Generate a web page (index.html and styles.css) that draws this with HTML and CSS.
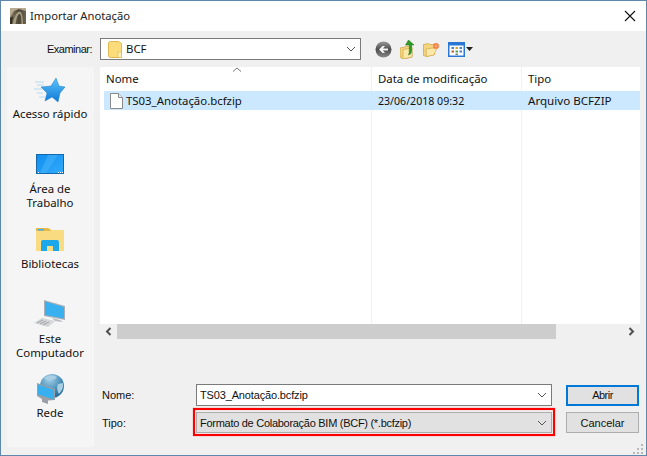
FILE: index.html
```html
<!DOCTYPE html>
<html lang="pt">
<head>
<meta charset="utf-8">
<title>Importar Anotação</title>
<link rel="stylesheet" href="styles.css">
</head>
<body>
<div class="window">
  <header class="titlebar">
    <svg class="app-icon" width="16" height="16" viewBox="0 0 16 16"><defs><linearGradient id="ap" x1="0" y1="0" x2="1" y2="0"><stop offset="0" stop-color="#8a7f66"/><stop offset=".55" stop-color="#4c4535"/><stop offset="1" stop-color="#6e6450"/></linearGradient></defs><rect width="16" height="16" fill="url(#ap)"/><path d="M0 0h16v3L9 1 4 3 0 9z" fill="#b5aa90"/><path d="M3 16C4 9 6.500 4 9.500 3.500c2.500 0 3.500 6 3.500 12.500h-1.500c0-6-.5-10-2-10S6.500 10 5.500 16z" fill="#a79c84"/><path d="M0 10l3-2-1 8H0z" fill="#332e22"/></svg>
    <span class="title">Importar Anotação</span>
    <svg class="close" width="12" height="12" viewBox="0 0 12 12"><path d="M1 1l10 10M11 1L1 11" stroke="#111" stroke-width="1.1" fill="none"/></svg>
  </header>
  <div class="content">
    <div class="toolbar">
      <label class="look-label">Examinar:</label>
      <div class="look-combo">
        <svg class="folder" width="14" height="17" viewBox="0 0 14 17"><path d="M.5 2.500q0-2 2-2h8l3 2v14h-11q-2 0-2-2z" fill="#fbdc7a" stroke="#e0b94e"/><rect x="10" y="11" width="3.500" height="5.500" fill="#fff0b8" stroke="#e0b94e" stroke-width=".7"/></svg>
        <span class="look-value">BCF</span>
        <svg class="chev chev-end" width="10" height="6" viewBox="0 0 10 6"><path d="M1 1l4 4 4-4" stroke="#555" fill="none"/></svg>
      </div>
      <div class="tools">
        <svg width="17" height="17" viewBox="0 0 17 17"><defs><linearGradient id="bk" x1="0" y1="0" x2="0" y2="1"><stop offset="0" stop-color="#9a9a9a"/><stop offset=".5" stop-color="#4e4e4e"/><stop offset="1" stop-color="#8a8a8a"/></linearGradient></defs><circle cx="8.500" cy="8.500" r="8" fill="url(#bk)"/><path d="M13 7.500H8l2-2.500H7.500L4 8.500 7.500 12H10L8 9.500h5z" fill="#f4f4f4"/></svg>
        <svg width="15" height="19" viewBox="0 0 15 19"><path d="M0 8l5-1 1-1 6 1v10l-9 2-3-2z" fill="#f4d57c" stroke="#c9a040" stroke-width=".7"/><path d="M3 9.500l9-1.500v9l-9 2z" fill="#fbe8a8" stroke="#c9a040" stroke-width=".6"/><path d="M8.500 0L14 5h-2.500v6q0 3-3 4 1-2 .8-5V5H5.500z" fill="#2f9a26" stroke="#1c7018" stroke-width=".5"/></svg>
        <svg width="17" height="15" viewBox="0 0 17 15"><path d="M.5 2.500l5-1 1 1 5 0v10l-8 2-3-1z" fill="#f4d57c" stroke="#c9a040" stroke-width=".7"/><path d="M3 7l11-1.500L11 13l-7.500 1.500z" fill="#fbe8a8" stroke="#c9a040" stroke-width=".6"/><circle cx="13" cy="4" r="3" fill="#ee7a3c"/><path d="M13 .5v7M9.500 4h7" stroke="#f7b090" stroke-width=".8"/></svg>
        <div class="view-btn">
          <svg width="17" height="15" viewBox="0 0 17 15"><rect x=".75" y=".75" width="15.500" height="13.500" fill="#fff" stroke="#2a78d4" stroke-width="1.500"/><rect x="1" y="1" width="15" height="2.500" fill="#2a78d4"/><rect x="3.500" y="5" width="2.500" height="2" fill="#4a7fc0"/><rect x="7.500" y="5" width="2.500" height="2" fill="#e0a030"/><rect x="11.500" y="5" width="2.500" height="2" fill="#4a7fc0"/><rect x="3.500" y="8.500" width="2.500" height="2" fill="#c05a30"/><rect x="7.500" y="8.500" width="2.500" height="2" fill="#50a050"/><rect x="11.500" y="8.500" width="2.500" height="2" fill="#4a7fc0"/><rect x="7.500" y="11.500" width="2.500" height="1.500" fill="#808080"/></svg>
          <svg width="8" height="4" viewBox="0 0 8 4"><path d="M0 0h7L3.500 4z" fill="#222"/></svg>
        </div>
      </div>
    </div>
    <div class="main">
      <nav class="places">
        <div class="place place-quick">
          <svg width="32" height="32" viewBox="0 0 32 32"><defs><linearGradient id="st" x1="0" y1="0" x2="0" y2="1"><stop offset="0" stop-color="#5cc4fb"/><stop offset="1" stop-color="#0f78d6"/></linearGradient></defs><path d="M1 8h9M3 11h7M0 15h8M3 19h6M5 23h6" stroke="#b4dcf4" stroke-width="1"/><path d="M22 4l3 8 6 1-5 6-2 9-6-5-7 4 2-8-6-6 10-1z" fill="url(#st)" stroke="#1a78c8" stroke-width=".5"/></svg>
          <span class="place-label">Acesso rápido</span>
        </div>
        <div class="place place-desk">
          <svg width="32" height="32" viewBox="0 0 32 32"><defs><linearGradient id="dk" x1="0" y1="0" x2="1" y2="1"><stop offset="0" stop-color="#0f8cf0"/><stop offset="1" stop-color="#33acfa"/></linearGradient></defs><rect x="2.500" y="6.500" width="27" height="19" fill="url(#dk)" stroke="#1668a8"/><path d="M14 7h10L12 25H6z" fill="#4ab8fa" opacity=".5"/><path d="M4 24.500h1M24 24.500h1M26 24.500h1M28 24.500h1" stroke="#fff"/></svg>
          <span class="place-label">Área de<br>Trabalho</span>
        </div>
        <div class="place place-lib">
          <svg width="32" height="32" viewBox="0 0 32 32"><path d="M2 5q0-1 1-1h11l3 2h13v21H2z" fill="#f9dc82"/><path d="M2 4h12l3 2v1H2z" fill="#e8b94a"/><rect x="4" y="5" width="6" height="1.500" fill="#3ab0f0"/><path d="M7 27V18q0-2 2-2h14q2 0 2 2v9h-6v-5h-6v5z" fill="#1aa8ea"/></svg>
          <span class="place-label">Bibliotecas</span>
        </div>
        <div class="place place-pc">
          <svg width="32" height="32" viewBox="0 0 32 32"><path d="M10 2l21 6v14l-21-4z" fill="#aab0b6"/><path d="M11 3.500l19 5.500v11.500l-19-3.500z" fill="#39b0f0"/><path d="M18 20l8 2 3 2-8-1z" fill="#b8bcc0"/><path d="M0 25l8-5 13 3-7 6z" fill="#d4d6d8"/><path d="M3 25l6-3M6 26l6-3M9 27l6-3" stroke="#8e9296" stroke-width=".8"/></svg>
          <span class="place-label">Este<br>Computador</span>
        </div>
        <div class="place place-net">
          <svg width="32" height="32" viewBox="0 0 32 32"><defs><radialGradient id="gl" cx=".4" cy=".2" r=".9"><stop offset="0" stop-color="#a8d2e8"/><stop offset=".6" stop-color="#3f88b4"/><stop offset="1" stop-color="#1d5f8c"/></radialGradient></defs><circle cx="18" cy="13" r="12" fill="url(#gl)"/><path d="M10 5q7-5 13-1-2 3-6 3-3 2-7-2zM24 11l5-1q1 6-4 11-3-5-1-10z" fill="#a8cfe4"/><path d="M3 10l18 6v11l-7 .5v3.500l-6-2v-3l-5-3z" fill="#9aa0a6"/><path d="M4 11.500l16 5.500v9.500L4 21.500z" fill="#38b0f0"/></svg>
          <span class="place-label">Rede</span>
        </div>
      </nav>
      <div class="right">
        <div class="list">
          <div class="list-area">
            <div class="list-head">
              <div class="cell cell-name">Nome
                <svg class="sort" width="10" height="5" viewBox="0 0 10 5"><path d="M1 4.500L5 1l4 3.500" stroke="#777" fill="none"/></svg>
              </div>
              <div class="cell cell-date">Data de modificação</div>
              <div class="cell cell-type">Tipo</div>
            </div>
            <div class="list-row">
              <div class="cell cell-name cell-file">
                <svg width="13" height="16" viewBox="0 0 13 16"><path d="M.5.500h8l4 4v11H.500z" fill="#fff" stroke="#8a8a8a"/><path d="M8.500.500v4h4" fill="#eee" stroke="#8a8a8a"/></svg>
                TS03_Anotação.bcfzip
              </div>
              <div class="cell cell-date cell-stamp">23/06/2018 09:32</div>
              <div class="cell cell-type cell-kind">Arquivo BCFZIP</div>
            </div>
          </div>
          <div class="hscroll">
            <svg class="arrow" width="17" height="15" viewBox="0 0 17 15"><path d="M10.500 4L7 7.500l3.500 3.500" stroke="#505050" stroke-width="2" fill="none"/></svg>
            <div class="thumb"></div>
            <svg class="arrow arrow-end" width="17" height="15" viewBox="0 0 17 15"><path d="M6.500 4L10 7.500 6.500 11" stroke="#505050" stroke-width="2" fill="none"/></svg>
          </div>
        </div>
        <div class="form">
          <label class="form-label">Nome:</label>
          <div class="field field-name">
            <span>TS03_Anotação.bcfzip</span>
            <svg class="chev" width="10" height="6" viewBox="0 0 10 6"><path d="M1 1l4 4 4-4" stroke="#555" fill="none"/></svg>
          </div>
          <button class="btn btn-primary">Abrir</button>
          <label class="form-label">Tipo:</label>
          <div class="highlight">
            <div class="field field-type">
              <span>Formato de Colaboração BIM (BCF) (*.bcfzip)</span>
              <svg class="chev" width="10" height="6" viewBox="0 0 10 6"><path d="M1 1l4 4 4-4" stroke="#555" fill="none"/></svg>
            </div>
          </div>
          <button class="btn">Cancelar</button>
        </div>
      </div>
    </div>
  </div>
  <svg class="grip" width="12" height="12" viewBox="0 0 12 12"><path d="M8 2h2v2H8zM4 6h2v2H4zM8 6h2v2H8zM0 10h2v2H0zM4 10h2v2H4zM8 10h2v2H8z" fill="#b8b8b8"/></svg>
</div>
</body>
</html>
```
FILE: styles.css
```css
* { box-sizing: border-box; }
html, body { margin: 0; padding: 0; }
body { font: 11.4px/14px "Noto Sans", "Open Sans", sans-serif; color: #111; }
.window {
  position: relative;
  width: 647px;
  height: 456px;
  border: 1px solid #5f86ab;
  background: #f0f0f0;
  display: flex;
  flex-direction: column;
  overflow: hidden;
}
.titlebar {
  height: 30px;
  background: #fff;
  display: flex;
  align-items: center;
  padding: 0 10px 0 9px;
  flex: none;
}
.title { margin-left: 4px; color: #222; font-size: 11.2px; }
.close { margin-left: auto; }
.content { flex: 1; padding: 0 6px; display: flex; flex-direction: column; }
.toolbar { display: flex; align-items: center; height: 36px; flex: none; }
.look-label {
  width: 85px;
  text-align: right;
  font: 11px/14px "Liberation Sans", Arial, sans-serif;
  letter-spacing: -.5px;
}
.look-combo {
  width: 261px;
  height: 22px;
  margin-left: 8px;
  background: #fff;
  border: 1px solid #7a7a7a;
  display: flex;
  align-items: center;
  padding: 0 4px 0 7px;
}
.look-value { margin-left: 4px; }
.chev-end { margin-left: auto; }
.tools { display: flex; align-items: center; gap: 8px; margin-left: 14px; }
.view-btn { display: flex; align-items: center; gap: 1px; }
.main { display: flex; gap: 6px; height: 380px; }
.places {
  width: 87px;
  padding-right: 1px;
  background: #f5f5f5;
  display: flex;
  flex-direction: column;
  align-items: center;
  flex: none;
}
.place { display: flex; flex-direction: column; align-items: center; text-align: center; }
.place svg { display: block; }
.place-label { margin-top: 1px; }
.place-quick { margin-top: 7px; }
.place-desk { margin-top: 27px; }
.place-desk .place-label { margin-top: 2px; }
.place-lib { margin-top: 14px; }
.place-pc { margin-top: 27px; }
.place-pc .place-label { margin-top: 2px; }
.place-net { margin-top: 13px; }
.right { flex: 1; display: flex; flex-direction: column; min-width: 0; }
.list { height: 272px; display: flex; flex-direction: column; flex: none; background: #fff; }
.list-area {
  height: 257px;
  flex: none;
  background:
    linear-gradient(#f1f1f1, #f1f1f1) 271px 0 / 1px 100% no-repeat,
    linear-gradient(#f1f1f1, #f1f1f1) 421px 0 / 1px 100% no-repeat,
    #fff;
}
.list-head { display: flex; height: 24px; }
.list-row { display: flex; height: 19px; background: #cce8ff; margin-left: 4px; }
.cell { display: flex; align-items: center; white-space: nowrap; }
.cell-name { width: 271px; padding-left: 6px; position: relative; }
.list-row .cell-name { width: 267px; padding-left: 6px; }
.cell-file { gap: 3px; }
.cell-date { width: 150px; padding-left: 7px; }
.cell-stamp { font-size: 10.6px; }
.cell-type { padding-left: 7px; }
.cell-kind { font-size: 11.6px; }
.sort { position: absolute; left: 132px; top: 0; }
.hscroll { height: 15px; display: flex; background: #f0f0f0; flex: none; }
.arrow { flex: none; }
.arrow-end { margin-left: auto; }
.thumb { width: 439px; background: #cdcdcd; }
.form {
  display: grid;
  grid-template-columns: 96px 356px 87px;
  grid-template-rows: 22px 21px;
  row-gap: 6px;
  margin-top: 45px;
  align-items: center;
  font: 11px/14px "Liberation Sans", Arial, sans-serif;
}
.form-label { padding-left: 2px; }
.field {
  height: 22px;
  border: 1px solid #7a7a7a;
  background: #fff;
  display: flex;
  align-items: center;
  justify-content: space-between;
  padding: 0 4px 0 3px;
}
.field-name { letter-spacing: -.15px; }
.highlight { position: relative; }
.highlight::after {
  content: "";
  position: absolute;
  inset: -4px -3px -3px;
  border: 2px solid #f00;
  box-shadow: 0 0 1px #f66, inset 0 0 1px #f66;
  pointer-events: none;
}
.field-type { background: #e1e1e1; border-color: #adadad; height: 21px; letter-spacing: -.28px; }
.btn {
  font: inherit;
  color: #111;
  justify-self: end;
  width: 73px;
  height: 21px;
  padding: 0;
  background: #e1e1e1;
  border: 1px solid #adadad;
}
.btn-primary { border: 2px solid #0078d7; letter-spacing: -.5px; }
.grip { position: absolute; right: 1px; bottom: 1px; }
```
